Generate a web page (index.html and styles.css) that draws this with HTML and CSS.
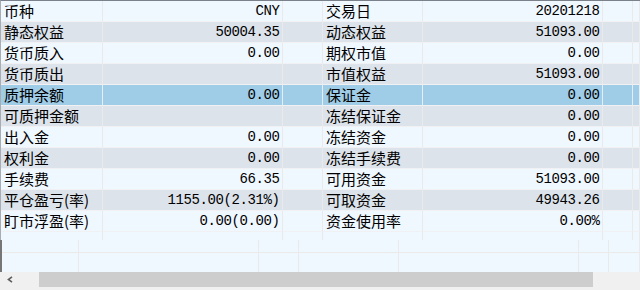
FILE: index.html
```html
<!DOCTYPE html>
<html lang="zh-CN">
<head>
<meta charset="utf-8">
<title>资金</title>
<link rel="stylesheet" href="styles.css">
</head>
<body>
<div class="table">
  <div class="row light"><div>币种</div><div class="num">CNY</div><div></div><div>交易日</div><div class="num">20201218</div><div></div><div></div></div>
  <div class="row gray"><div>静态权益</div><div class="num">50004.35</div><div></div><div>动态权益</div><div class="num">51093.00</div><div></div><div></div></div>
  <div class="row light"><div>货币质入</div><div class="num">0.00</div><div></div><div>期权市值</div><div class="num">0.00</div><div></div><div></div></div>
  <div class="row gray"><div>货币质出</div><div class="num"></div><div></div><div>市值权益</div><div class="num">51093.00</div><div></div><div></div></div>
  <div class="row sel"><div>质押余额</div><div class="num">0.00</div><div></div><div>保证金</div><div class="num">0.00</div><div></div><div></div></div>
  <div class="row gray"><div>可质押金额</div><div class="num"></div><div></div><div>冻结保证金</div><div class="num">0.00</div><div></div><div></div></div>
  <div class="row light"><div>出入金</div><div class="num">0.00</div><div></div><div>冻结资金</div><div class="num">0.00</div><div></div><div></div></div>
  <div class="row gray"><div>权利金</div><div class="num">0.00</div><div></div><div>冻结手续费</div><div class="num">0.00</div><div></div><div></div></div>
  <div class="row light"><div>手续费</div><div class="num">66.35</div><div></div><div>可用资金</div><div class="num">51093.00</div><div></div><div></div></div>
  <div class="row gray"><div>平仓盈亏(率)</div><div class="num">1155.00(2.31%)</div><div></div><div>可取资金</div><div class="num">49943.26</div><div></div><div></div></div>
  <div class="row light"><div>盯市浮盈(率)</div><div class="num">0.00(0.00)</div><div></div><div>资金使用率</div><div class="num">0.00%</div><div></div><div></div></div>
  <div class="row light"><div></div><div></div><div></div><div></div><div></div><div></div><div></div></div>
</div>
<div class="band">
  <div></div><div></div><div></div><div></div><div></div><div></div><div></div>
  <div></div><div></div><div></div><div></div><div></div><div></div><div></div>
</div>
<div class="scroll">
  <div class="btn"><svg width="6" height="7" viewBox="0 0 6 7"><path d="M5 0.8 L1.4 3.5 L5 6.2" fill="none" stroke="#5f5f5f" stroke-width="1.6"/></svg></div>
  <div class="thumb"></div>
  <div class="track"></div>
</div>
</body>
</html>
```
FILE: styles.css
```css
html, body {
  margin: 0;
  padding: 0;
}
body {
  width: 640px;
  height: 290px;
  overflow: hidden;
  background: #f0f0f0;
  font-family: "Noto Sans CJK SC", "Noto Sans", sans-serif;
  color: #000;
}
.table {
  height: 239px;
  overflow: hidden;
  border-top: 1px solid #7b818a;
  border-left: 1px solid #a9adb2;
}
.row {
  display: grid;
  grid-template-columns: 102px 180px 40px 100px 180px 30px 1fr;
  height: 21px;
}
.row > div {
  border-right: 1px solid #eaeaea;
  border-bottom: 1px solid #f1f1f3;
  line-height: 20px;
  font-size: 15px;
  padding: 0 2px 0 3px;
  white-space: nowrap;
  overflow: hidden;
}
.row .num {
  text-align: right;
  font-family: "Liberation Mono", "Noto Sans CJK SC", monospace;
  font-size: 14px;
  letter-spacing: -0.4px;
  padding-right: 2.5px;
  padding-top: 1px;
  line-height: 19px;
}
.light { background: #eff7ff; }
.gray { background: #dce3ea; }
.sel { background: #9fcce6; }
.sel > div { border-right-color: #e4eef4; }
.band {
  height: 32px;
  display: grid;
  grid-template-columns: 77px 180px 40px 100px 180px 30px 1fr;
  grid-template-rows: 13px 19px;
  border-left: 2px solid #767676;
  background: #eff7ff;
}
.band > div {
  border-right: 1px solid #eaeaea;
}
.band > div:nth-child(-n+7) {
  border-bottom: 1px solid #eaeaea;
}
.scroll {
  display: flex;
  height: 15px;
  background: #f0f0f0;
}
.btn {
  width: 39px;
  display: flex;
  align-items: center;
  padding-left: 7px;
  box-sizing: border-box;
}
.btn svg { display: block; }
.thumb {
  width: 554px;
  background: #cdcdcd;
}
.track {
  flex: 1;
}
```
